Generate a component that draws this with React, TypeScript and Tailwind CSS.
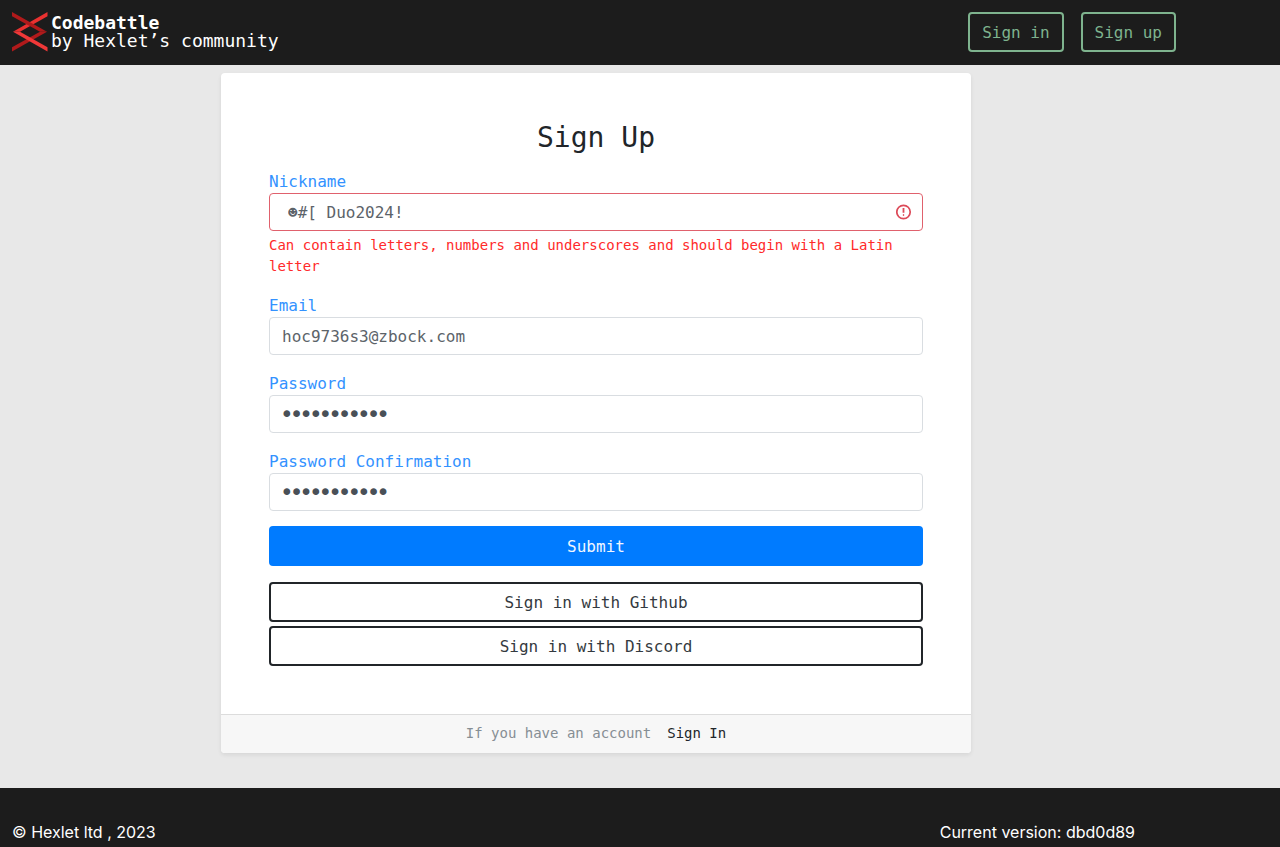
import { useState } from 'react';
import type { ReactNode } from 'react';

function Logo() {
  return (
    <svg width="36" height="40" viewBox="0 0 36 40" aria-hidden="true">
      <path d="M35.500 0v4.200L8 19.700 1 19.700z" fill="#e93130" />
      <path d="M0 0L35 19.700H28L0 4.200z" fill="#b01a1b" />
      <path d="M35 19.700L0 39.500v-4.200L28 19.700z" fill="#b01a1b" />
      <path d="M1 19.700h7l27.500 15.600v4.200z" fill="#f03838" />
    </svg>
  );
}

function AlertIcon() {
  return (
    <svg width="16" height="16" viewBox="0 0 16 16" fill="none" stroke="#dc4a58" aria-hidden="true">
      <circle cx="7.500" cy="8" r="6.700" strokeWidth="1.700" />
      <path d="M7.500 4v4.800" strokeWidth="1.800" />
      <circle cx="7.500" cy="11" r="0.500" fill="#dc4a58" strokeWidth="0.900" />
    </svg>
  );
}

type FieldProps = {
  id: string;
  label: string;
  type?: string;
  initial: string;
  error?: ReactNode;
};

function Field({ id, label, type = 'text', initial, error }: FieldProps) {
  const [value, setValue] = useState(initial);
  return (
    <div className="flex flex-col">
      <label htmlFor={id} className="self-start pt-0.5 leading-[22px] text-[#3392ff]">
        {label}
      </label>
      <div
        className={
          error
            ? 'flex h-[38px] items-center rounded border border-[#e0616d] bg-white pr-2.5 pl-[18px]'
            : 'flex h-[38px] items-center rounded border border-[#d9dde1] bg-white px-3'
        }
      >
        <input
          id={id}
          type={type}
          value={value}
          onChange={(e) => setValue(e.target.value)}
          aria-invalid={Boolean(error)}
          aria-describedby={error ? `${id}-error` : undefined}
          className={
            type === 'password'
              ? 'min-w-0 flex-1 bg-transparent pt-0.5 text-[#495057] outline-none [-webkit-text-stroke:2px_#495057]'
              : 'min-w-0 flex-1 bg-transparent pt-0.5 text-[#5c6369] outline-none'
          }
        />
        {error && <AlertIcon />}
      </div>
      {error && (
        <p id={`${id}-error`} className="mt-1 text-sm leading-[21px] text-[#ff2a2a]">
          {error}
        </p>
      )}
    </div>
  );
}

export default function App() {
  return (
    <div className="flex min-h-screen flex-col bg-[#e8e8e8] font-['DejaVu_Sans_Mono','Liberation_Mono',monospace] text-base text-[#212529]">
      <header className="flex items-center justify-between bg-[#1c1c1c] pt-3 pr-[104px] pb-[13px] pl-3">
        <a href="#home" className="flex items-center gap-[3px] text-lg leading-[18px] text-white">
          <Logo />
          <span className="flex flex-col">
            <span className="font-bold">Codebattle</span>
            <span>by Hexlet’s community</span>
          </span>
        </a>
        <nav className="flex gap-[17px]">
          <a href="#signin" className="rounded border-2 border-[#7eb38e] px-3 pt-[7px] pb-[5px] leading-6 text-[#7eb38e]">
            Sign in
          </a>
          <a href="#signup" className="rounded border-2 border-[#7eb38e] px-3 pt-[7px] pb-[5px] leading-6 text-[#7eb38e]">
            Sign up
          </a>
        </nav>
      </header>

      <main className="flex justify-center pt-2 pr-[88px] pb-[35px]">
        <section className="w-full max-w-[750px] overflow-hidden rounded bg-white shadow-[0_2px_4px_rgba(0,0,0,0.08)]">
          <div className="p-12">
            <h1 className="mb-3.5 text-center text-[28px] leading-[34px] font-medium">Sign Up</h1>
            <form onSubmit={(e) => e.preventDefault()}>
              <div className="flex flex-col gap-4">
                <Field
                  id="nickname"
                  label="Nickname"
                  initial="☻#[ Duo2024!"
                  error="Can contain letters, numbers and underscores and should begin with a Latin letter"
                />
                <Field id="email" label="Email" initial="hoc9736s3@zbock.com" />
                <Field id="password" label="Password" type="password" initial="codebattle1" />
                <Field id="confirmation" label="Password Confirmation" type="password" initial="codebattle1" />
              </div>
              <button type="submit" className="mt-[15px] h-10 w-full rounded bg-[#007bff] pt-0.5 text-[#f0f6ff]">
                Submit
              </button>
            </form>
            <div className="mt-4 flex flex-col gap-1">
              <button type="button" className="h-10 rounded border-2 border-[#212529] pt-0.5 text-[#343a40]">
                Sign in with Github
              </button>
              <button type="button" className="h-10 rounded border-2 border-[#212529] pt-0.5 text-[#343a40]">
                Sign in with Discord
              </button>
            </div>
          </div>
          <div className="flex justify-center gap-4 border-t border-[#dcdcdc] bg-[#f7f7f7] pt-2 pb-[9px] text-sm leading-[21px]">
            <span className="text-[#868e94]">If you have an account</span>
            <a href="#signin" className="text-[#212529]">
              Sign In
            </a>
          </div>
        </section>
      </main>

      <footer className="flex flex-1 justify-between bg-[#1c1c1c] pt-8 pr-[145px] pl-3 font-['Inter',sans-serif] leading-6 text-white">
        <span>© Hexlet ltd , 2023</span>
        <span>Current version: dbd0d89</span>
      </footer>
    </div>
  );
}
